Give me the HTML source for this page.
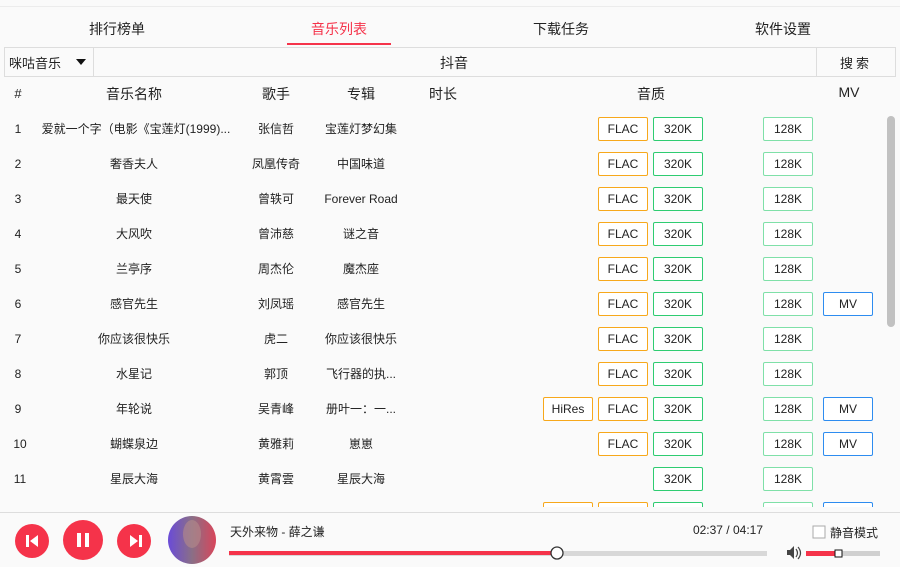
<!DOCTYPE html>
<html><head><meta charset="utf-8"><style>
*{margin:0;padding:0;box-sizing:border-box}
body{width:900px;height:567px;background:#fafafa;font-family:"Liberation Sans","Noto Sans CJK SC",sans-serif;color:#222;position:relative;overflow:hidden}
.a{position:absolute}
.tab{position:absolute;top:19px;font-size:14px;width:120px;text-align:center}
.r{position:absolute;left:0;width:880px;height:35px;font-size:12px}
.r .c{position:absolute;top:0;line-height:35px;text-align:center;white-space:nowrap;overflow:hidden}
.b{position:absolute;top:5px;width:50px;height:24px;border:1px solid;border-radius:2px;background:#fff;font-size:12px;line-height:22px;text-align:center;color:#222}
.o{border-color:#f7a81b}.g{border-color:#2ecc71}.l{border-color:#7fe0a8}.m{border-color:#2d8cf0}
.h{position:absolute;top:84px;font-size:14px;text-align:center}
</style></head><body>
<div class="a" style="left:0;top:6px;width:900px;height:1px;background:#ececec"></div>
<div class="tab" style="left:57px">排行榜单</div>
<div class="tab" style="left:279px;color:#f5334a">音乐列表</div>
<div class="tab" style="left:501px">下载任务</div>
<div class="tab" style="left:723px">软件设置</div>
<div class="a" style="left:287px;top:43px;width:104px;height:2px;background:#f5334a"></div>
<div class="a" style="left:4px;top:47px;width:892px;height:30px;border:1px solid #ddd;background:#fafafa"></div>
<div class="a" style="left:93px;top:47px;width:1px;height:30px;background:#ddd"></div>
<div class="a" style="left:816px;top:47px;width:1px;height:30px;background:#ddd"></div>
<div class="a" style="left:9px;top:53px;font-size:13px">咪咕音乐</div>
<div class="a" style="left:76px;top:59px;width:0;height:0;border-left:5px solid transparent;border-right:5px solid transparent;border-top:6px solid #111"></div>
<div class="a" style="left:440px;top:53px;font-size:14px">抖音</div>
<div class="a" style="left:840px;top:53px;font-size:13px;letter-spacing:3px">搜索</div>
<div class="h" style="left:10px;width:16px;font-size:13px;top:86px">#</div>
<div class="h" style="left:84px;width:100px">音乐名称</div>
<div class="h" style="left:246px;width:60px">歌手</div>
<div class="h" style="left:331px;width:60px">专辑</div>
<div class="h" style="left:413px;width:60px">时长</div>
<div class="h" style="left:621px;width:60px">音质</div>
<div class="h" style="left:829px;width:40px">MV</div>
<div class="a" style="left:0;top:112px;width:900px;height:395px;overflow:hidden">
<div class="r" style="top:0"><div class="c" style="left:8px;width:20px">1</div><div class="c" style="left:36px;width:200px">爱就一个字（电影《宝莲灯(1999)...</div><div class="c" style="left:241px;width:70px">张信哲</div><div class="c" style="left:316px;width:90px">宝莲灯梦幻集</div><div class="b o" style="left:598px">FLAC</div><div class="b g" style="left:653px">320K</div><div class="b l" style="left:763px">128K</div></div>
<div class="r" style="top:35px"><div class="c" style="left:8px;width:20px">2</div><div class="c" style="left:34px;width:200px">奢香夫人</div><div class="c" style="left:241px;width:70px">凤凰传奇</div><div class="c" style="left:316px;width:90px">中国味道</div><div class="b o" style="left:598px">FLAC</div><div class="b g" style="left:653px">320K</div><div class="b l" style="left:763px">128K</div></div>
<div class="r" style="top:70px"><div class="c" style="left:8px;width:20px">3</div><div class="c" style="left:34px;width:200px">最天使</div><div class="c" style="left:241px;width:70px">曾轶可</div><div class="c" style="left:316px;width:90px">Forever Road</div><div class="b o" style="left:598px">FLAC</div><div class="b g" style="left:653px">320K</div><div class="b l" style="left:763px">128K</div></div>
<div class="r" style="top:105px"><div class="c" style="left:8px;width:20px">4</div><div class="c" style="left:34px;width:200px">大风吹</div><div class="c" style="left:241px;width:70px">曾沛慈</div><div class="c" style="left:316px;width:90px">谜之音</div><div class="b o" style="left:598px">FLAC</div><div class="b g" style="left:653px">320K</div><div class="b l" style="left:763px">128K</div></div>
<div class="r" style="top:140px"><div class="c" style="left:8px;width:20px">5</div><div class="c" style="left:34px;width:200px">兰亭序</div><div class="c" style="left:241px;width:70px">周杰伦</div><div class="c" style="left:316px;width:90px">魔杰座</div><div class="b o" style="left:598px">FLAC</div><div class="b g" style="left:653px">320K</div><div class="b l" style="left:763px">128K</div></div>
<div class="r" style="top:175px"><div class="c" style="left:8px;width:20px">6</div><div class="c" style="left:34px;width:200px">感官先生</div><div class="c" style="left:241px;width:70px">刘凤瑶</div><div class="c" style="left:316px;width:90px">感官先生</div><div class="b o" style="left:598px">FLAC</div><div class="b g" style="left:653px">320K</div><div class="b l" style="left:763px">128K</div><div class="b m" style="left:823px">MV</div></div>
<div class="r" style="top:210px"><div class="c" style="left:8px;width:20px">7</div><div class="c" style="left:34px;width:200px">你应该很快乐</div><div class="c" style="left:241px;width:70px">虎二</div><div class="c" style="left:316px;width:90px">你应该很快乐</div><div class="b o" style="left:598px">FLAC</div><div class="b g" style="left:653px">320K</div><div class="b l" style="left:763px">128K</div></div>
<div class="r" style="top:245px"><div class="c" style="left:8px;width:20px">8</div><div class="c" style="left:34px;width:200px">水星记</div><div class="c" style="left:241px;width:70px">郭顶</div><div class="c" style="left:316px;width:90px">飞行器的执...</div><div class="b o" style="left:598px">FLAC</div><div class="b g" style="left:653px">320K</div><div class="b l" style="left:763px">128K</div></div>
<div class="r" style="top:280px"><div class="c" style="left:8px;width:20px">9</div><div class="c" style="left:34px;width:200px">年轮说</div><div class="c" style="left:241px;width:70px">吴青峰</div><div class="c" style="left:316px;width:90px">册叶一：一...</div><div class="b o" style="left:543px">HiRes</div><div class="b o" style="left:598px">FLAC</div><div class="b g" style="left:653px">320K</div><div class="b l" style="left:763px">128K</div><div class="b m" style="left:823px">MV</div></div>
<div class="r" style="top:315px"><div class="c" style="left:8px;width:24px">10</div><div class="c" style="left:34px;width:200px">蝴蝶泉边</div><div class="c" style="left:241px;width:70px">黄雅莉</div><div class="c" style="left:316px;width:90px">崽崽</div><div class="b o" style="left:598px">FLAC</div><div class="b g" style="left:653px">320K</div><div class="b l" style="left:763px">128K</div><div class="b m" style="left:823px">MV</div></div>
<div class="r" style="top:350px"><div class="c" style="left:8px;width:24px">11</div><div class="c" style="left:34px;width:200px">星辰大海</div><div class="c" style="left:241px;width:70px">黄霄雲</div><div class="c" style="left:316px;width:90px">星辰大海</div><div class="b g" style="left:653px">320K</div><div class="b l" style="left:763px">128K</div></div>
<div class="r" style="top:385px"><div class="b o" style="left:543px"></div><div class="b o" style="left:598px"></div><div class="b g" style="left:653px"></div><div class="b l" style="left:763px"></div><div class="b m" style="left:823px"></div></div>
<div class="a" style="left:887px;top:4px;width:8px;height:211px;border-radius:4px;background:#c1c1c1"></div>
</div>
<div class="a" style="left:0;top:512px;width:900px;height:55px;background:#fafafa;border-top:1px solid #ddd"></div>
<svg class="a" style="left:0;top:512px" width="900" height="55">
<circle cx="32" cy="29" r="17" fill="#f5334a"/>
<rect x="26" y="23" width="3" height="12" fill="#fff"/><path d="M38 23 L30 29 L38 35Z" fill="#fff"/>
<circle cx="83" cy="28" r="20" fill="#f5334a"/>
<rect x="77" y="21" width="4" height="14" fill="#fff"/><rect x="85" y="21" width="4" height="14" fill="#fff"/>
<circle cx="134" cy="29" r="17" fill="#f5334a"/>
<rect x="139" y="23" width="3" height="12" fill="#fff"/><path d="M130 23 L138 29 L130 35Z" fill="#fff"/>
<defs><linearGradient id="cv" x1="0" x2="1"><stop offset="0" stop-color="#6a4bd8"/><stop offset="0.5" stop-color="#8a6f86"/><stop offset="1" stop-color="#d9455a"/></linearGradient></defs>
<circle cx="192" cy="28" r="24" fill="url(#cv)"/>
<ellipse cx="192" cy="22" rx="9" ry="14" fill="#b58a8a" opacity="0.6"/>
<rect x="229" y="39" width="538" height="5" fill="#d8d8d8"/>
<rect x="229" y="39" width="328" height="4" fill="#f5334a"/>
<circle cx="557" cy="41" r="6" fill="#fff" stroke="#333" stroke-width="1.3"/>
<rect x="813" y="14" width="12" height="12" fill="#fff" stroke="#aaa"/>
<path d="M787 38h3l4-4v13l-4-4h-3z" fill="#444"/><path d="M796 37q3 4 0 8M798 35q5 6 0 12" stroke="#444" fill="none" stroke-width="1.2"/>
<rect x="806" y="39" width="74" height="5" fill="#d0d0d0"/>
<rect x="806" y="39" width="33" height="5" fill="#f5334a"/>
<rect x="835" y="38" width="7" height="7" fill="#fff" stroke="#111"/>
</svg>
<div class="a" style="left:230px;top:523px;font-size:12px">天外来物 - 薛之谦</div>
<div class="a" style="left:663px;top:523px;width:100px;text-align:right;font-size:12px">02:37 / 04:17</div>
<div class="a" style="left:830px;top:524px;font-size:12px">静音模式</div>
</body></html>
